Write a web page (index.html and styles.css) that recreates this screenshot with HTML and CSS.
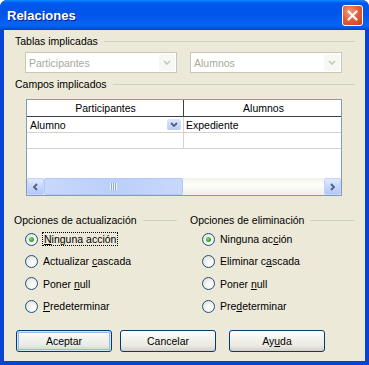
FILE: index.html
```html
<!DOCTYPE html>
<html lang="es">
<head>
    <meta charset="UTF-8">
    <title>Relaciones</title>
    <link rel="stylesheet" href="styles.css">
</head>
<body>
    <div class="window">
        <!-- Barra de titulo -->
        <div class="titlebar">
            <span class="title">Relaciones</span>
            <span class="close">
                <svg width="11" height="11" viewBox="0 0 11 11"><path d="M1.5 1.5 L9.5 9.5 M9.5 1.5 L1.5 9.5" stroke="#fff" stroke-width="2.2" stroke-linecap="round"/></svg>
            </span>
        </div>

        <div class="client">
            <!-- Tablas -->
            <div class="group-label"><span>Tablas implicadas</span></div>
            <div class="combos">
                <div class="combo">
                    <span class="combo-text">Participantes</span>
                    <span class="combo-drop"><svg width="8" height="5" viewBox="0 0 8 5"><path d="M1 1 L4 4 L7 1" fill="none" stroke="#c9c7ba" stroke-width="1.6"/></svg></span>
                </div>
                <div class="combo">
                    <span class="combo-text">Alumnos</span>
                    <span class="combo-drop"><svg width="8" height="5" viewBox="0 0 8 5"><path d="M1 1 L4 4 L7 1" fill="none" stroke="#c9c7ba" stroke-width="1.6"/></svg></span>
                </div>
            </div>

            <!-- Campos -->
            <div class="group-label"><span>Campos implicados</span></div>
            <div class="grid">
                <div class="grid-head">
                    <div class="cell col1">Participantes</div>
                    <div class="cell col2">Alumnos</div>
                </div>
                <div class="grid-row">
                    <div class="cell col1">
                        Alumno
                        <span class="cell-drop"><svg width="8" height="5" viewBox="0 0 8 5"><path d="M1 1 L4 4 L7 1" fill="none" stroke="#4d6185" stroke-width="1.8"/></svg></span>
                    </div>
                    <div class="cell col2">Expediente</div>
                </div>
                <div class="grid-row">
                    <div class="cell col1"></div>
                    <div class="cell col2"></div>
                </div>
                <div class="grid-empty"></div>
                <div class="hscroll">
                    <span class="sb-btn"><svg width="5" height="8" viewBox="0 0 5 8"><path d="M4 1 L1 4 L4 7" fill="none" stroke="#4d6185" stroke-width="1.8"/></svg></span>
                    <span class="sb-thumb"><span class="grip"></span></span>
                    <span class="sb-track"></span>
                    <span class="sb-btn"><svg width="5" height="8" viewBox="0 0 5 8"><path d="M1 1 L4 4 L1 7" fill="none" stroke="#4d6185" stroke-width="1.8"/></svg></span>
                </div>
            </div>

            <!-- Opciones -->
            <div class="options">
                <div class="opt-col">
                    <div class="group-label"><span>Opciones de actualización</span></div>
                    <div class="radio checked"><span class="dot"></span><span class="focus"><u>N</u>inguna acción</span></div>
                    <div class="radio"><span class="dot"></span><span>Actualizar <u>c</u>ascada</span></div>
                    <div class="radio"><span class="dot"></span><span>Poner <u>n</u>ull</span></div>
                    <div class="radio"><span class="dot"></span><span><u>P</u>redeterminar</span></div>
                </div>
                <div class="opt-col">
                    <div class="group-label"><span>Opciones de eliminación</span></div>
                    <div class="radio checked"><span class="dot"></span><span>Ninguna ac<u>c</u>ión</span></div>
                    <div class="radio"><span class="dot"></span><span>Eliminar c<u>a</u>scada</span></div>
                    <div class="radio"><span class="dot"></span><span>Poner <u>n</u>ull</span></div>
                    <div class="radio"><span class="dot"></span><span>Pre<u>d</u>eterminar</span></div>
                </div>
            </div>

            <!-- Botones -->
            <div class="buttons">
                <button class="btn default">Aceptar</button>
                <button class="btn">Cancelar</button>
                <button class="btn help">Ay<u>u</u>da</button>
            </div>
        </div>
    </div>
</body>
</html>
```

FILE: styles.css
```css
body {
    margin: 0;
    background-color: #ffffff;
    font-family: "Liberation Sans", Arial, sans-serif;
    font-size: 10.5px;
    color: #000000;
}

.window {
    width: 369px;
    height: 365px;
    display: flex;
    flex-direction: column;
    background-color: #0843d4;
    border-radius: 7px 7px 0 0;
    overflow: hidden;
}

.titlebar {
    height: 30px;
    flex: none;
    display: flex;
    align-items: center;
    justify-content: space-between;
    padding: 0 6px 0 7px;
    background: linear-gradient(180deg, #0a8cff 0%, #0058ee 10%, #0055e9 45%, #0a63f5 85%, #0050e0 95%, #003dd0 100%);
}

.title {
    color: white;
    font-weight: bold;
    font-size: 13px;
    text-shadow: 1px 1px #0a1e8c;
}

.close {
    width: 19px;
    height: 19px;
    margin-top: 1px;
    display: flex;
    justify-content: center;
    align-items: center;
    border: 1px solid #ffffff;
    border-radius: 3px;
    background: radial-gradient(circle at 35% 30%, #f39a7c 0%, #e5603c 45%, #c9401a 100%);
}

.client {
    flex: 1;
    margin: 0 4px 4px 4px;
    background-color: #ece9d8;
    display: flex;
    flex-direction: column;
}

.group-label {
    display: flex;
    align-items: center;
    gap: 6px;
    height: 13px;
    line-height: 13px;
    margin: 5px 10px 0 11px;
}

.group-label::after {
    content: "";
    flex: 1;
    height: 1px;
    background-color: #d0d0bf;
}

.combos {
    display: flex;
    gap: 13px;
    margin: 4px 0 0 21px;
}

.combo {
    width: 146px;
    height: 19px;
    display: flex;
    align-items: center;
    justify-content: space-between;
    border: 1px solid #c9c7ba;
    background-color: #ffffff;
    color: #aca899;
    padding-left: 3px;
    padding-right: 1px;
}

.combo-drop {
    width: 16px;
    height: 17px;
    display: flex;
    justify-content: center;
    align-items: center;
    background-color: #f7f7f4;
    border-radius: 2px;
}

.group-label + .grid {
    margin-top: 8px;
}

.grid {
    width: 314px;
    height: 95px;
    margin-left: 22px;
    border: 1px solid #7f9db9;
    background-color: #ffffff;
    display: flex;
    flex-direction: column;
}

.grid-head {
    display: flex;
    height: 16px;
    border-bottom: 1px solid #404040;
}

.grid-head .cell {
    justify-content: center;
}

.grid-head .col1 {
    border-right: 1px solid #404040;
}

.grid-row {
    display: flex;
    height: 15px;
    border-bottom: 1px solid #d6d3ce;
}

.cell {
    display: flex;
    align-items: center;
    justify-content: space-between;
}

.col1 {
    width: 157px;
    border-right: 1px solid #d6d3ce;
    padding-left: 3px;
    padding-right: 2px;
    box-sizing: border-box;
}

.col2 {
    flex: 1;
    padding-left: 2px;
}

.cell-drop {
    width: 14px;
    height: 11px;
    display: flex;
    justify-content: center;
    align-items: center;
    background: linear-gradient(180deg, #dde8fd 0%, #b9cdf8 100%);
    border-radius: 2px;
}

.grid-empty {
    flex: 1;
}

.hscroll {
    display: flex;
    height: 17px;
    background: linear-gradient(180deg, #f3f2ec 0%, #fefefb 40%, #f0efe8 100%);
}

.sb-btn {
    width: 17px;
    height: 17px;
    display: flex;
    justify-content: center;
    align-items: center;
    box-sizing: border-box;
    border: 1px solid #c3d3fd;
    border-radius: 2px;
    background: linear-gradient(180deg, #e1eafe 0%, #c3d3fd 60%, #b4c8f6 100%);
}

.sb-thumb {
    width: 139px;
    display: flex;
    justify-content: center;
    align-items: center;
    box-sizing: border-box;
    border: 1px solid #b4c8f6;
    border-radius: 2px;
    background: linear-gradient(90deg, #c9d8fc 0%, #bacffa 50%, #c9d8fc 100%);
}

.grip {
    width: 7px;
    height: 7px;
    background: repeating-linear-gradient(90deg, #eef3fe 0 1px, #8ca9e6 1px 2px);
}

.sb-track {
    flex: 1;
}

.options {
    display: flex;
    gap: 13px;
    margin: 18px 11px 0 0;
}

.opt-col {
    width: 173px;
    display: flex;
    flex-direction: column;
}

.opt-col:last-child {
    flex: 1;
}

.opt-col .group-label {
    margin: 0 0 0 10px;
}

.opt-col:last-child .group-label {
    margin-left: 0;
}

.radio {
    height: 22px;
    display: flex;
    align-items: center;
    gap: 5px;
    margin-left: 21px;
}

.radio + .radio {
    height: 22.5px;
}

.opt-col:last-child .radio {
    margin-left: 12px;
}

.radio:nth-child(2) {
    margin-top: 1px;
}

.dot {
    width: 11px;
    height: 11px;
    border: 1px solid #1c5180;
    border-radius: 50%;
    display: flex;
    justify-content: center;
    align-items: center;
    background: radial-gradient(circle at 65% 65%, #ffffff 0%, #f4f3ee 40%, #dcd9cf 100%);
}

.radio.checked .dot::after {
    content: "";
    width: 5px;
    height: 5px;
    border-radius: 50%;
    background: radial-gradient(circle at 40% 35%, #7ce07a 0%, #2aa826 60%, #1b8c18 100%);
}

.focus {
    outline: 1px dotted #000000;
    padding: 0 1px;
}

.buttons {
    display: flex;
    margin: 12px 0 0 12px;
}

.btn {
    width: 96px;
    height: 22px;
    font-family: "Liberation Sans", Arial, sans-serif;
    font-size: 10.5px;
    color: #000000;
    border: 1px solid #003c74;
    border-radius: 3px;
    background: linear-gradient(180deg, #ffffff 0%, #f4f4f0 30%, #ecebe6 70%, #d6d0c5 100%);
    padding: 0;
}

.btn + .btn {
    margin-left: 8px;
}

.btn.help {
    margin-left: 13px;
}

.btn.default {
    box-shadow: inset 0 0 0 1px #cee7ff, inset 0 0 0 2px #98b8ea;
}
```
